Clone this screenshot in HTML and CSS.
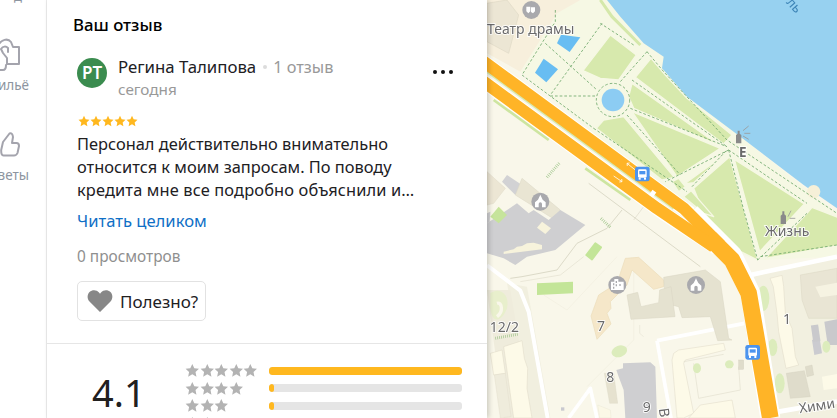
FILE: index.html
```html
<!DOCTYPE html>
<html lang="ru">
<head>
<meta charset="utf-8">
<title>Ваш отзыв</title>
<link rel="stylesheet" href="styles.css">
</head>
<body>
<div class="page">
  <nav class="rail">
    <div class="rail-top">д</div>
    <div class="rail-item rail-housing">
      <svg class="rail-icon" width="20" height="33" viewBox="0 0 20 33"><path d="M-2 8C1 1 8 0 11 4L13 9H19V26H7V20L3 15 1 11C3 8 6 8 8 10V14M-2 32H3C5 32 6 30 6 27" fill="none" stroke="#a4a4ad" stroke-width="2" stroke-linejoin="round" stroke-linecap="round"/></svg>
      <span class="rail-label">Жильё</span>
    </div>
    <div class="rail-item rail-tips">
      <svg class="rail-icon" width="20" height="25" viewBox="0 0 20 25"><path d="M3.500 23.500H14Q16.500 23.500 17.500 21L19 14Q19 11 16.500 11H12L13 5Q12.500 .5 9.500 1.500L3 10 1.200 18Q1 23.500 3.500 23.500Z" fill="none" stroke="#a4a4ad" stroke-width="2" stroke-linejoin="round"/></svg>
      <span class="rail-label">Советы</span>
    </div>
  </nav>

  <main class="panel">
    <section class="review">
      <h2 class="title">Ваш отзыв</h2>
      <div class="author">
        <div class="avatar">РТ</div>
        <div class="author-text">
          <div class="author-line">
            <span class="author-name">Регина Талипова</span>
            <span class="dot"></span>
            <span class="author-count">1 отзыв</span>
          </div>
          <div class="date">сегодня</div>
        </div>
        <div class="more"><i></i><i></i><i></i></div>
      </div>
      <div class="stars-gold">
        <svg width="12" height="12" viewBox="0 0 24 24"><use href="#star"/></svg>
        <svg width="12" height="12" viewBox="0 0 24 24"><use href="#star"/></svg>
        <svg width="12" height="12" viewBox="0 0 24 24"><use href="#star"/></svg>
        <svg width="12" height="12" viewBox="0 0 24 24"><use href="#star"/></svg>
        <svg width="12" height="12" viewBox="0 0 24 24"><use href="#star"/></svg>
      </div>
      <p class="body-text">Персонал действительно внимательно<br>относится к моим запросам. По поводу<br><span class="last-line">кредита мне все подробно объяснили и…</span></p>
      <a class="read-more">Читать целиком</a>
      <div class="views">0 просмотров</div>
      <button class="useful">
        <svg width="26" height="24" viewBox="0 0 26 24"><path d="M13 23 2.500 12.500C0 10 0 5.500 2.500 3c2.800-2.600 7-2.400 9.500.500l1 1.200 1-1.200C16.500.600 20.700.400 23.500 3 26 5.500 26 10 23.500 12.500Z" fill="#878787"/></svg>
        <span>Полезно?</span>
      </button>
    </section>

    <section class="rating">
      <div class="score">4.1</div>
      <div class="rows">
        <div class="row">
          <div class="row-stars">
            <svg viewBox="0 0 24 24"><use href="#star"/></svg><svg viewBox="0 0 24 24"><use href="#star"/></svg><svg viewBox="0 0 24 24"><use href="#star"/></svg><svg viewBox="0 0 24 24"><use href="#star"/></svg><svg viewBox="0 0 24 24"><use href="#star"/></svg>
          </div>
          <div class="bar"><div class="fill" style="width:100%"></div></div>
        </div>
        <div class="row">
          <div class="row-stars">
            <svg viewBox="0 0 24 24"><use href="#star"/></svg><svg viewBox="0 0 24 24"><use href="#star"/></svg><svg viewBox="0 0 24 24"><use href="#star"/></svg><svg viewBox="0 0 24 24"><use href="#star"/></svg>
          </div>
          <div class="bar"><div class="fill" style="width:5px"></div></div>
        </div>
        <div class="row">
          <div class="row-stars">
            <svg viewBox="0 0 24 24"><use href="#star"/></svg><svg viewBox="0 0 24 24"><use href="#star"/></svg><svg viewBox="0 0 24 24"><use href="#star"/></svg>
          </div>
          <div class="bar"><div class="fill" style="width:5px"></div></div>
        </div>
        <div class="row">
          <div class="row-stars">
            <svg viewBox="0 0 24 24"><use href="#star"/></svg><svg viewBox="0 0 24 24"><use href="#star"/></svg>
          </div>
          <div class="bar"><div class="fill" style="width:5px"></div></div>
        </div>
      </div>
    </section>
  </main>

  <div class="map">
    <svg class="map-svg" width="350" height="418" viewBox="0 0 1050 1254">
      <defs>
        <path id="star" d="M12 1.500 15.300 8.600 23 9.500 17.300 14.800 18.800 22.500 12 18.700 5.200 22.500 6.700 14.800 1 9.500 8.700 8.600Z"/>
        <g id="bus">
          <rect x="-22" y="-22" width="44" height="44" rx="7" fill="#4c94ee"/>
          <rect x="-13" y="-14" width="26" height="25" rx="4" fill="#fff"/>
          <rect x="-9" y="-9" width="18" height="10" fill="#4c94ee"/>
          <rect x="-11" y="11" width="6" height="6" fill="#fff"/>
          <rect x="5" y="11" width="6" height="6" fill="#fff"/>
        </g>
        <circle id="poi" r="27" fill="#a9a9ad"/>
        <path id="church" d="M-16 17V2L-7-6-2-16 0-21 2-16 7-6 16 2V17H5V7A5 5 0 0 0-5 7V17Z" fill="#fff"/>
      </defs>

      <rect width="1050" height="1254" fill="#f9f7ea"/>

      <!-- upper-left plaza -->
      <polygon points="0,0 280,0 210,60 100,215 0,160" fill="#f7efdc"/>
      <polygon points="0,10 60,0 95,45 65,160 0,125" fill="#ece6d4" stroke="#dfd9c6" stroke-width="2"/>
      <!-- park ground -->
      <polygon points="210,40 280,0 360,0 530,170 530,210 760,410 1050,640 1050,770 810,780 760,760 200,300 100,215" fill="#f6f8e4"/>

      <!-- water -->
      <path d="M360 0 400 50 470 130 530 170 525 205 600 290 760 410 950 555 1000 590 1050 625V0Z" fill="#97d1f0"/>
      <circle cx="980" cy="575" r="20" fill="#f6f0d8"/>
      <path d="M340 0 375 50 460 135" fill="none" stroke="#d5e8aa" stroke-width="9"/>

      <!-- lawns -->
      <g fill="#d7e9ad" stroke="#f6f8e4" stroke-width="4" stroke-linejoin="round">
        <polygon points="370,105 448,165 395,240 340,235 288,212"/>
        <polygon points="492,175 535,225 600,295 735,405 710,432 445,232"/>
        <polygon points="435,250 695,435 440,325 425,290"/>
        <polygon points="435,335 700,445 585,520 570,530"/>
        <polygon points="328,385 350,360 410,350 562,532 525,540"/>
        <polygon points="555,545 575,535 595,560 575,575"/>
        <polygon points="592,552 712,465 620,548"/>
        <polygon points="620,565 728,470 812,780 752,750 650,640"/>
        <polygon points="742,478 952,612 818,755"/>
        <polygon points="975,622 1060,655 1060,735 835,775 960,640"/>
        <polygon points="590,590 612,572 680,650 650,640"/>
      </g>

      <!-- ponds -->
      <g fill="#68bdf2">
        <polygon points="222,104 280,112 248,156 210,130"/>
        <polygon points="170,176 213,208 178,247 144,218"/>
      </g>
      <circle cx="378" cy="300" r="34" fill="#8cccf3"/>

      <!-- park paths -->
      <g fill="none" stroke="#6ea76a" stroke-width="2.500" stroke-dasharray="8 6">
        <circle cx="378" cy="300" r="50"/>
        <path d="M205 30V65L105 225 320 385M345 70 190 285M175 130 330 270M480 155 400 245M190 288H330M430 325 720 440M435 240 720 440M420 345 580 525M320 385 600 575M725 450 535 545M725 450 770 630 812 780M725 450 960 610M480 155 530 215 720 420 1050 640M812 780 960 640M820 770 1050 735M615 560 720 450"/>
        <path d="M440 135 340 70"/>
      </g>

      <!-- ground shades and thin lines -->
      <polygon points="60,850 120,860 190,1254 130,1254" fill="#f1efdf"/>
      <polygon points="0,870 70,870 135,1254 50,1254" fill="#efecdc"/>
      <path d="M10 880C35 860 70 880 60 925 45 965 15 975 10 925Z" fill="#e8efcc"/>
      <path d="M30 910C45 905 50 935 30 950" fill="none" stroke="#f9f7ea" stroke-width="10"/>
      <polygon points="800,830 940,790 1050,770 1050,1254 880,1254 820,1000" fill="#f2f0e0"/>

      <!-- small roads -->
      <g fill="none" stroke="#fff" stroke-linejoin="round">
        <path d="M0 796 100 872 125 935 182 1254" stroke-width="12"/>
        <path d="M780 827 1050 770" stroke-width="14"/>
        <path d="M510 1022 772 970" stroke-width="11"/>
        <path d="M510 1022 552 1254" stroke-width="11"/>
        <path d="M245 1254 310 1165 330 1254" stroke-width="11"/>
        <path d="M875 1235 1050 1205" stroke-width="14"/>
      </g>
      <path d="M458 975 458 1000 470 1010" fill="none" stroke="#e9e6d7" stroke-width="2"/>
      <path d="M405 630 360 685 270 730 210 810 105 830 70 835" fill="none" stroke="#dcdac8" stroke-width="3"/>
      <path d="M100 845 220 825 290 770" fill="none" stroke="#e2e0cf" stroke-width="2"/>
      <path d="M305 550 640 800" fill="none" stroke="#dcdac8" stroke-width="3"/>
      <path d="M470 620 440 660" fill="none" stroke="#dcdac8" stroke-width="2"/>
      <path d="M170 885 240 930 390 770M440 790 440 1020 300 1160" fill="none" stroke="#f1efdf" stroke-width="2"/>

      <!-- buildings lower-left -->
      <polygon points="0,515 55,565 20,610 0,615" fill="#ece6d4" stroke="#dfd9c6" stroke-width="1.500"/>
      <polygon points="45,545 60,525 105,555 85,585" fill="#d2d2d4"/>
      <polygon points="105,535 220,630 205,660 85,585" fill="#e9e5d3" stroke="#dbd7c4" stroke-width="1.500"/>
      <polygon points="0,670 90,610 125,640 140,630 185,660 220,630 295,675 205,750 120,770 85,795 50,775 0,760" fill="#cfcfd1"/>
      <polygon points="35,620 60,645 35,670 10,650" fill="#c6e49b"/>
      <polygon points="165,665 192,685 175,702 150,683" fill="#f7f3dc"/>
      <polygon points="50,755 80,748 90,740 105,738 120,730 140,728 165,735 165,748 50,762" fill="#f7f3dc"/>
      <polygon points="0,640 10,635 8,665 0,670" fill="#cfcfd1"/>
      <polygon points="150,850 258,845 258,880 150,885" fill="#c3e598"/>
      <path d="M298 765 325 730 342 742 315 778Z" fill="#c3e598" stroke="#c3e598" stroke-width="6" stroke-linejoin="round"/>
      <ellipse cx="397" cy="1054" rx="24" ry="17" fill="#dcecbc" transform="rotate(-20 397 1054)"/>

      <!-- central buildings -->
      <polygon points="415,775 455,772 530,840 530,860 500,868 435,810 420,855 370,905 372,925 360,940 372,972 330,1018 312,948 335,885 390,850" fill="#f5e7c9" stroke="#ecdcba" stroke-width="2"/>
      <polygon points="530,832 655,810 700,845 725,1015 735,1020 692,1022 670,950 585,953 575,920 540,912 532,865" fill="#e5e2d0" stroke="#d9d5c2" stroke-width="1.500"/>
      <polygon points="420,885 452,877 462,920 515,908 518,870 552,860 564,950 432,958" fill="#e5e2d0" stroke="#d9d5c2" stroke-width="1.500"/>
      <polygon points="388,1110 408,1105 408,1090 490,1087 505,1100 510,1254 415,1254 410,1170 395,1130" fill="#cfcfd1"/>
      <polygon points="352,1120 380,1120 392,1210 368,1210" fill="#e6e2cf" stroke="#d9d5c2"/>
      <rect x="222" y="1222" width="10" height="10" fill="#c9c9d0"/>
      <polygon points="332,1215 370,1230 372,1254 338,1254" fill="#fbf8e6" stroke="#e3e0cf"/>

      <!-- right blocks -->
      <polygon points="849,835 885,826 890,860 895,940 915,985 925,1070 935,1095 897,1105 875,995 870,940 859,860" fill="#fdfae8" stroke="#dfd9c6" stroke-width="1.500"/>
      <polygon points="940,825 1050,805 1050,955 965,955 945,900" fill="#e9e5d4" stroke="#dad6c3" stroke-width="1.500"/>
      <polygon points="985,860 1050,848 1050,885 1000,892" fill="#f6f3e2"/>
      <polygon points="1012,965 1050,958 1050,1035 1022,1035" fill="#c9c9cc"/>
      <polygon points="975,1020 998,1015 1005,1060 982,1065" fill="#cbcbd0"/>
      <polygon points="968,1082 995,1082 1005,1132 975,1138" fill="#f2f0e0"/>
      <rect x="975" y="975" width="22" height="50" fill="#c9c9cc" transform="rotate(-8 985 1000)"/>
      <polygon points="898,1120 952,1112 970,1190 910,1195" fill="#dfdccb" stroke="#cfcbba"/>
      <polygon points="955,1100 975,1095 980,1125 960,1130" fill="#dfdccb" stroke="#cfcbba"/>
      <polygon points="1005,1130 1050,1122 1050,1165 1010,1170" fill="#fdfae8"/>
      <ellipse cx="829" cy="895" rx="18" ry="38" fill="#dcecbc"/>
      <ellipse cx="857" cy="1042" rx="14" ry="26" fill="#dcecbc"/>
      <ellipse cx="878" cy="1150" rx="15" ry="30" fill="#dcecbc"/>
      <ellipse cx="1018" cy="1040" rx="12" ry="18" fill="#dcecbc"/>

      <!-- courtyard block -->
      <polygon points="560,1060 575,1050 710,1030 715,1050 595,1080 590,1090 620,1240 590,1254 570,1254 555,1080" fill="#fdfae8" stroke="#dfd9c6" stroke-width="1.500"/>
      <polygon points="605,1254 640,1215 735,1200 745,1254" fill="#fdfae8" stroke="#dfd9c6" stroke-width="1.500"/>
      <path d="M590 1085 710 1063M620 1090 635 1195 760 1170 755 1100" fill="none" stroke="#e3e0cf" stroke-width="2"/>
      <ellipse cx="630" cy="1105" rx="12" ry="15" fill="#dcecbc"/>
      <ellipse cx="727" cy="1093" rx="13" ry="12" fill="#dcecbc"/>
      <rect x="755" y="1080" width="15" height="28" fill="#dfdccb" stroke="#cfcbba"/>

      <!-- left houses -->
      <polygon points="50,1040 105,1022 112,1075 122,1105 120,1165 135,1254 80,1254" fill="#fdfae8" stroke="#dfd9c6" stroke-width="1.500"/>
      <polygon points="10,1060 45,1050 55,1120 20,1125" fill="#fdfae8" stroke="#dfd9c6" stroke-width="1.500"/>
      <polygon points="22,1125 55,1120 72,1250 40,1254" fill="#efecdc" stroke="#dfd9c6" stroke-width="1"/>
      <path d="M25 1015 95 1002" stroke="#9ec48a" stroke-width="9" stroke-dasharray="2 4" fill="none"/>

      <!-- highway -->
      <g fill="none" stroke-linejoin="round" stroke-linecap="butt">
        <path d="M-10 185 610 640" stroke="#fff" stroke-width="42"/>
        <path d="M-10 245 530 640 690 745" stroke="#fff" stroke-width="42"/>
        <path d="M0 215 560 625" stroke="#d7e9b0" stroke-width="8"/>
        <path d="M610 640 735 765 790 880 850 1254" stroke="#fff" stroke-width="60"/>
        <path d="M-10 185 590 625 700 735" stroke="#ffb427" stroke-width="36"/>
        <path d="M-10 245 510 625 680 740" stroke="#ffb427" stroke-width="36"/>
        <path d="M670 715 735 780 785 880 850 1254" stroke="#ffb427" stroke-width="50"/>
      </g>
      <path d="M20 300 185 420" stroke="#cde5a0" stroke-width="8"/>
      <path d="M295 505 430 600" stroke="#cde5a0" stroke-width="8"/>
      <path d="M180 532 218 488" stroke="#9ec48a" stroke-width="9" stroke-dasharray="2 4" fill="none"/>
      <path d="M342 655 370 682" stroke="#9ec48a" stroke-width="9" stroke-dasharray="2 4" fill="none"/>
      <rect x="490" y="572" width="14" height="18" fill="#fff" transform="rotate(35 497 581)"/>
      <path d="M420 490 445 510M420 490l8-1M420 490l1 8" stroke="#fff" stroke-width="3" fill="none" opacity=".8"/>
      <path d="M380 528 405 545M405 545l-8 1M405 545l-1-8" stroke="#fff" stroke-width="3" fill="none" opacity=".8"/>

      <!-- POIs -->
      <use href="#poi" x="133" y="30"/>
      <path d="M118 20h12v14l-6 6-6-6zM132 22h12v12l-6 6-6-4z" fill="#fff"/>
      <use href="#poi" x="160" y="605"/>
      <use href="#church" x="160" y="605"/>
      <use href="#poi" x="391" y="855"/>
      <path d="M372 870V845h10v-8h12v8h16v25z" fill="#fff"/>
      <path d="M378 850h4v6h-4zM378 860h4v6h-4zM386 843h4v6h-4zM386 853h4v6h-4zM397 852h4v6h-4z" fill="#a9a9ad"/>
      <use href="#poi" x="627" y="855"/>
      <use href="#church" x="627" y="855"/>

      <use href="#bus" x="466" y="522"/>
      <use href="#bus" x="797" y="1057"/>

      <!-- statues -->
      <g fill="#8a8a8a">
        <path d="M747 430V405l5-4V392h6v9l5 4v25z"/>
        <path d="M881 672V647l5-4v-9h6v9l5 4v25z"/>
      </g>
      <path d="M768 392 785 378M772 400H790M768 408 785 418" stroke="#9a9a9a" stroke-width="2.500" fill="none"/>
      <path d="M903 650 912 632M908 655H925" stroke="#9a9a9a" stroke-width="2.500" fill="none"/>

      <!-- labels -->
      <g class="map-label">
        <text x="0" y="103">Театр драмы</text>
        <text x="756" y="472" class="map-label-bold">Е</text>
        <text x="834" y="708">Жизнь</text>
        <text x="8" y="997">12/2</text>
        <text x="330" y="993">7</text>
        <text x="358" y="1145">8</text>
        <text x="467" y="1237">9</text>
        <text x="888" y="972">1</text>
        <text x="938" y="1240" transform="rotate(-9 938 1240)">Хими</text>
        <text x="533" y="1254" transform="rotate(82 540 1230)">В</text>
      </g>
      <text class="map-water" x="896" y="8" transform="rotate(48 896 8)">ль</text>
    </svg>
  </div>
</div>
</body>
</html>
```

FILE: styles.css
```css
* { box-sizing: border-box; }
html, body { margin: 0; padding: 0; }
body {
  width: 837px;
  height: 418px;
  overflow: hidden;
  background: #fff;
  font-family: "Noto Sans", "Open Sans", sans-serif;
  color: #21201f;
}
.page { display: flex; width: 837px; height: 418px; overflow: hidden; }

.rail {
  flex: 0 0 47px;
  height: 418px;
  border-right: 1px solid #ececec;
  background: #fff;
  overflow: hidden;
}
.rail-top {
  height: 3px;
  font-size: 13px;
  line-height: 13px;
  margin-top: -10px;
  margin-bottom: 45px;
  padding-left: 14px;
  color: #8d95a0;
}
.rail-item {
  display: flex;
  flex-direction: column;
  align-items: flex-end;
  padding-right: 17px;
}
.rail-icon { align-self: flex-start; flex: none; display: block; }
.rail-housing { height: 94px; }
.rail-housing .rail-icon { margin-bottom: 6px; }
.rail-tips .rail-icon { margin-bottom: 10px; }
.rail-label {
  font-size: 13.500px;
  line-height: 16px;
  color: #8d95a0;
  white-space: nowrap;
}

.panel {
  flex: 0 0 440px;
  height: 418px;
  background: #fff;
  position: relative;
  z-index: 2;
  box-shadow: 2px 0 5px rgba(0, 0, 0, .18);
  overflow: hidden;
}
.review {
  padding: 15px 0 0 26px;
  height: 344px;
  border-bottom: 1px solid #e6e6e6;
}
.title {
  margin: 0;
  font-size: 16.800px;
  line-height: 20px;
  font-weight: 500;
  color: #000;
}
.author {
  display: flex;
  margin: 21px 0 0 4px;
  align-items: flex-start;
}
.avatar {
  width: 30px;
  height: 30px;
  margin-top: 2px;
  border-radius: 50%;
  background: #3b8c4f;
  color: #fff;
  font-size: 17px;
  font-weight: 600;
  line-height: 30px;
  text-align: center;
  flex: none;
}
.author-text { margin-left: 11px; width: 315px; }
.author-line { display: flex; align-items: center; height: 22px; }
.author-name { font-size: 16.800px; line-height: 22px; }
.dot {
  width: 4px;
  height: 4px;
  margin: 0 6px 0 7px;
  background: #dcdcdc;
  border-radius: 50%;
}
.author-count, .date {
  font-size: 16.300px;
  line-height: 22px;
  color: #999;
}
.date { font-size: 15.300px; line-height: 20px; margin-top: 1px; }
.more { display: flex; gap: 4px; margin-top: 14px; }
.more i { display: block; width: 4px; height: 4px; border-radius: 50%; background: #111; }

.stars-gold { display: flex; margin: 16px 0 0 5px; height: 12px; }
.stars-gold svg { fill: #ffb81f; display: block; }

.body-text {
  margin: 5px 0 0 4px;
  font-size: 16.400px;
  line-height: 23px;
  white-space: nowrap;
}
.last-line { letter-spacing: .14px; }
.read-more {
  display: block;
  margin: 8px 0 0 4px;
  font-size: 16.600px;
  line-height: 24px;
  color: #0f6fc6;
}
.views {
  margin: 13px 0 0 4px;
  font-size: 15.400px;
  line-height: 22px;
  color: #8f8f8f;
}
.useful {
  display: flex;
  align-items: center;
  gap: 7px;
  width: 129px;
  height: 40px;
  margin: 13px 0 0 4px;
  padding: 0 0 0 9px;
  background: #fff;
  border: 1px solid #e2e2e2;
  border-radius: 5px;
  font: inherit;
  font-size: 17px;
  color: #21201f;
}
.useful svg { flex: none; }

.rating { display: flex; height: 80px; }
.score {
  width: 138px;
  padding: 28px 0 0 45px;
  font-size: 38px;
  line-height: 40px;
  white-space: nowrap;
  color: #21201f;
}
.rows { padding-top: 18px; }
.row { display: flex; align-items: center; height: 17.500px; }
.row-stars { width: 84px; display: flex; }
.row-stars svg { fill: #b3b3b3; display: block; width: 14.600px; height: 14.600px; }
.bar {
  width: 193px;
  height: 8px;
  border-radius: 3px;
  background: #e5e5e5;
  overflow: hidden;
}
.fill { height: 100%; border-radius: 3px; background: #ffb81f; }

.map { flex: 0 0 350px; height: 418px; overflow: hidden; }
.map-svg { display: block; filter: blur(.35px); }
.map-label text {
  font-family: "Noto Sans", sans-serif;
  font-size: 42px;
  fill: #6a6a6a;
  stroke: #fff;
  stroke-width: 5px;
  paint-order: stroke;
}
.map-label .map-label-bold { font-size: 40px; font-weight: 700; }
.map-water {
  font-family: "Noto Sans", sans-serif;
  font-size: 40px;
  fill: #3f86b8;
}
```
